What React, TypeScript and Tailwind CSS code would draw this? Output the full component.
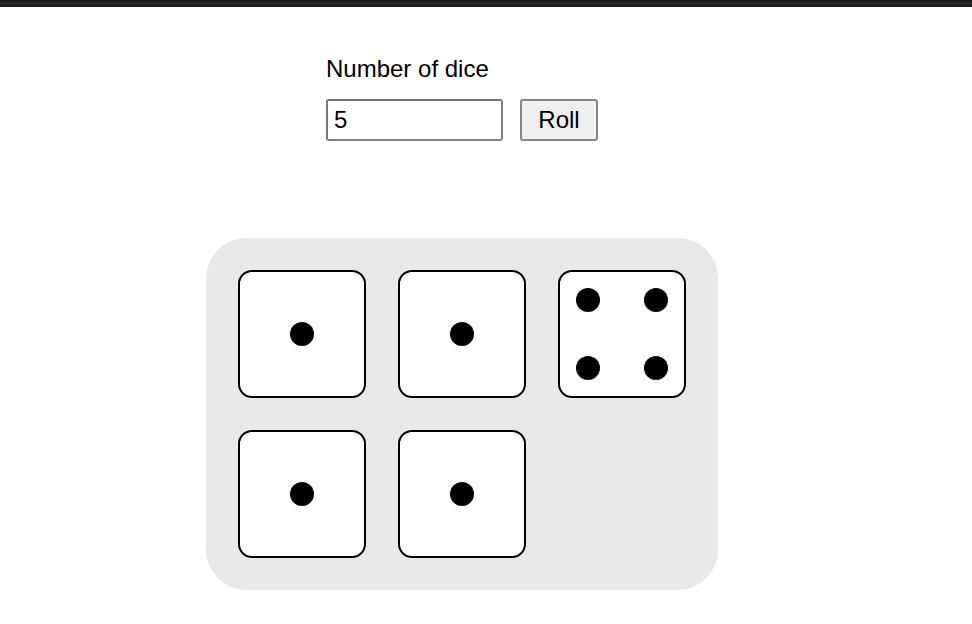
import React from "react";

const PIPS: Record<number, [number, number][]> = {
  1: [[64, 64]],
  4: [
    [30, 30],
    [98, 30],
    [30, 98],
    [98, 98],
  ],
};

function Die({ value }: { value: number }) {
  return (
    <div className="relative w-[128px] h-[128px] rounded-[14px] border-2 border-black bg-white">
      {PIPS[value].map(([x, y], i) => (
        <div
          key={i}
          className="absolute w-[24px] h-[24px] rounded-full bg-black"
          style={{ left: x - 12 - 2, top: y - 12 - 2 }}
        />
      ))}
    </div>
  );
}

export default function App() {
  const dice = [1, 1, 4, 1, 1];
  return (
    <div className="min-h-[624px] bg-white" style={{ fontFamily: '"Liberation Sans", Arial, sans-serif' }}>
      <div className="h-[7px] bg-[#1b1b1b] flex flex-col">
        <div className="h-[3px]" />
        <div className="h-[1px] bg-[#333333]" />
      </div>
      <div className="flex flex-col items-center pr-[48px]">
        <div className="mt-[48px] w-[272px] flex flex-col">
          <label className="text-[24px] leading-[28px] text-black">Number of dice</label>
          <div className="mt-[16px] flex items-center gap-[17px]">
            <input
              defaultValue="5"
              className="w-[177px] h-[42px] border-2 border-[#808080] border-t-[#767676] border-l-[#767676] rounded-[3px] px-[6px] text-[24px] text-black outline-none"
            />
            <button className="w-[78px] h-[42px] border-2 border-[#858585] rounded-[3px] bg-[#efefef] text-[24px] text-black">
              Roll
            </button>
          </div>
        </div>
        <div className="mt-[97px] w-[512px] h-[352px] rounded-[40px] bg-[#e9e9e9] p-[32px] grid grid-cols-3 gap-[32px] content-start">
          {dice.map((v, i) => (
            <Die key={i} value={v} />
          ))}
        </div>
      </div>
    </div>
  );
}
